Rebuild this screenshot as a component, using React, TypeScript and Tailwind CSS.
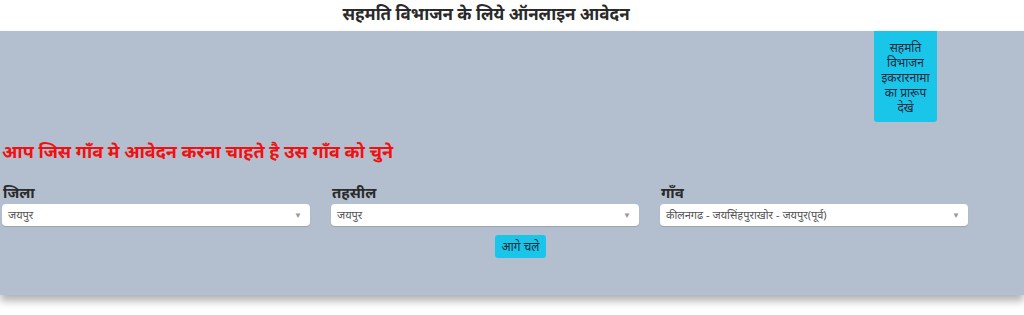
const selects = [
  { label: 'जिला', value: 'जयपुर' },
  { label: 'तहसील', value: 'जयपुर' },
  { label: 'गाँव', value: 'कीलनगढ - जयसिंहपुराखोर - जयपुर(पूर्व)' },
];

function Select({ label, value }: { label: string; value: string }) {
  return (
    <div className="flex flex-col">
      <label className="text-[15px] font-bold leading-[18px] text-[#2b2b2b] pl-[1px]">{label}</label>
      <div className="mt-[3px] h-[22px] bg-white rounded-[4px] shadow-[0_1px_1px_rgba(0,0,0,0.15)] flex items-center justify-between pl-[6px] pr-[8px]">
        <span className="text-[11px] text-[#555]">{value}</span>
        <span className="text-[8px] text-[#999]">▼</span>
      </div>
    </div>
  );
}

export default function App() {
  return (
    <div className="w-[1024px] h-[315px] bg-white overflow-hidden font-['Noto_Sans',sans-serif]">
      <h1 className="h-[31px] flex items-center justify-center text-[17px] font-bold text-[#2a2a2a] pb-[4px] pr-[52px] shadow-[0_2px_4px_rgba(0,0,0,0.08)] relative">
        सहमति विभाजन के लिये ऑनलाइन आवेदन
      </h1>
      <div className="h-[264px] bg-[#b3bfcf] shadow-[0_6px_8px_rgba(0,0,0,0.3)] relative">
        <div className="flex justify-end pr-[87px]">
          <button className="w-[63px] h-[91px] bg-[#1ac5ea] rounded-b-[3px] text-[12px] leading-[15px] text-[#1c2a3a] pt-[2px] px-[2px]">
            सहमति विभाजन इकरारनामा का प्रारूप देखे
          </button>
        </div>
        <h2 className="mt-[17px] pl-[2px] text-[18px] font-bold leading-[24px] text-[#f01010]">
          आप जिस गाँव मे आवेदन करना चाहते है उस गाँव को चुने
        </h2>
        <div className="mt-[20px] grid grid-cols-[308px_308px_308px] gap-x-[21px] pl-[2px]">
          {selects.map((s) => (
            <Select key={s.label} label={s.label} value={s.value} />
          ))}
        </div>
        <div className="mt-[9px] flex justify-center pl-[17px]">
          <button className="h-[23px] px-[7px] bg-[#1ac5ea] rounded-[3px] text-[12px] text-[#1c2a3a]">
            आगे चले
          </button>
        </div>
      </div>
    </div>
  );
}
